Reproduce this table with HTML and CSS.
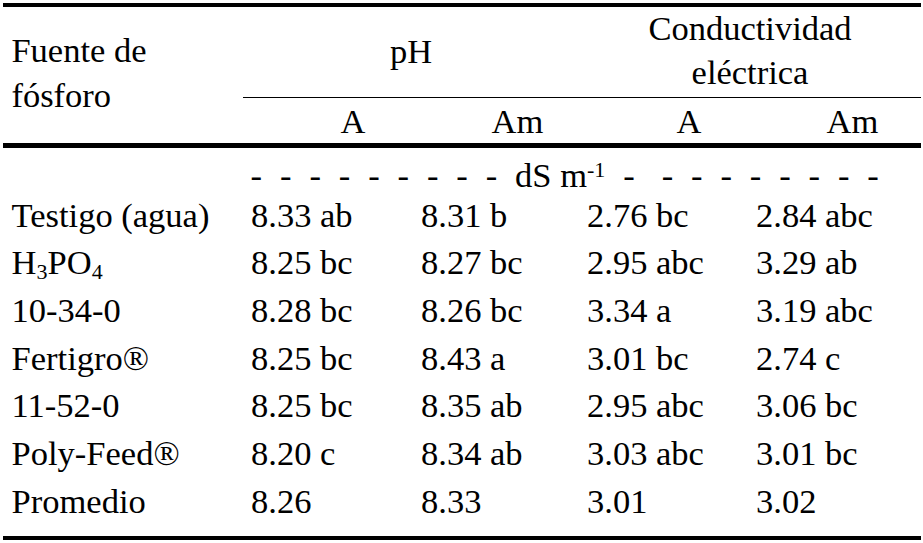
FILE: index.html
```html
<!DOCTYPE html>
<html lang="es">
<head>
<meta charset="utf-8">
<title>Tabla pH y conductividad eléctrica</title>
<link rel="stylesheet" href="styles.css">
</head>
<body>
<div class="tbl">
  <div class="h-src">Fuente de<br>fósforo</div>
  <div class="h-group h-ph">pH</div>
  <div class="h-group h-ce"><div class="h-ce-text">Conductividad<br>eléctrica</div></div>
  <div class="h-sub sub-a">A</div>
  <div class="h-sub sub-am">Am</div>
  <div class="h-sub sub-a">A</div>
  <div class="h-sub sub-am">Am</div>
  <div class="rule"></div>
  <div class="units">
    <span class="d">-</span><span class="d">-</span><span class="d">-</span><span class="d">-</span><span class="d">-</span><span class="d">-</span><span class="d">-</span><span class="d">-</span><span class="d">-</span>
    <span class="lbl">dS m<sup>-1</sup></span>
    <span class="d d-wide">-</span><span class="d">-</span><span class="d">-</span><span class="d">-</span><span class="d">-</span><span class="d">-</span><span class="d">-</span><span class="d">-</span><span class="d">-</span>
  </div>

  <div class="c c1">Testigo (agua)</div><div class="c">8.33 ab</div><div class="c">8.31 b</div><div class="c">2.76 bc</div><div class="c">2.84 abc</div>
  <div class="c c1">H<sub>3</sub>PO<sub>4</sub></div><div class="c">8.25 bc</div><div class="c">8.27 bc</div><div class="c">2.95 abc</div><div class="c">3.29 ab</div>
  <div class="c c1">10-34-0</div><div class="c">8.28 bc</div><div class="c">8.26 bc</div><div class="c">3.34 a</div><div class="c">3.19 abc</div>
  <div class="c c1">Fertigro®</div><div class="c">8.25 bc</div><div class="c">8.43 a</div><div class="c">3.01 bc</div><div class="c">2.74 c</div>
  <div class="c c1">11-52-0</div><div class="c">8.25 bc</div><div class="c">8.35 ab</div><div class="c">2.95 abc</div><div class="c">3.06 bc</div>
  <div class="c c1">Poly-Feed®</div><div class="c">8.20 c</div><div class="c">8.34 ab</div><div class="c">3.03 abc</div><div class="c">3.01 bc</div>
  <div class="c c1">Promedio</div><div class="c">8.26</div><div class="c">8.33</div><div class="c">3.01</div><div class="c">3.02</div>
</div>
</body>
</html>
```

FILE: styles.css
```css
html, body {
  margin: 0;
  padding: 0;
  background: #ffffff;
}

body {
  font-family: "Liberation Serif", "Times New Roman", serif;
  font-size: 34.5px;
  color: #000000;
}

.tbl {
  box-sizing: border-box;
  width: 918px;
  margin: 3px 2px 0 3px;
  border-top: 4px solid #000;
  border-bottom: 4px solid #000;
  padding-bottom: 10.5px;
  display: grid;
  grid-template-columns: 240px 170px 166px 169px 173px;
}

.h-src {
  grid-column: 1;
  grid-row: 1 / span 2;
  padding-top: 20.5px;
  padding-left: 8.4px;
  line-height: 45px;
}

.h-group {
  box-sizing: border-box;
  height: 91px;
  border-bottom: 1px solid #000;
  text-align: center;
}

.h-ph {
  grid-column: 2 / span 2;
  grid-row: 1;
  padding-top: 22px;
  line-height: 45px;
}

.h-ce {
  grid-column: 4 / span 2;
  grid-row: 1;
  line-height: 44px;
}

.h-ce-text {
  margin-top: -1.3px;
}

.h-sub {
  grid-row: 2;
  box-sizing: border-box;
  height: 45px;
  padding-top: 1.3px;
  line-height: 44px;
}

.sub-a {
  padding-left: 97.6px;
}

.sub-am {
  padding-left: 78.6px;
}

.rule {
  grid-column: 1 / -1;
  height: 5px;
  background: #000;
}

.units {
  grid-column: 2 / -1;
  box-sizing: border-box;
  height: 43.6px;
  padding-top: 8.2px;
  padding-left: 7.6px;
  line-height: 38px;
  display: flex;
  gap: 17.9px;
  white-space: nowrap;
}

.d-wide {
  margin-right: 9px;
}

.lbl sup {
  font-size: 22px;
  line-height: 0;
  vertical-align: 10px;
}

.c {
  line-height: 47.7px;
  padding-left: 8px;
  white-space: nowrap;
}

.c1 {
  padding-left: 8.6px;
}

.c sub {
  font-size: 22px;
  line-height: 0;
  vertical-align: -5px;
}
```
